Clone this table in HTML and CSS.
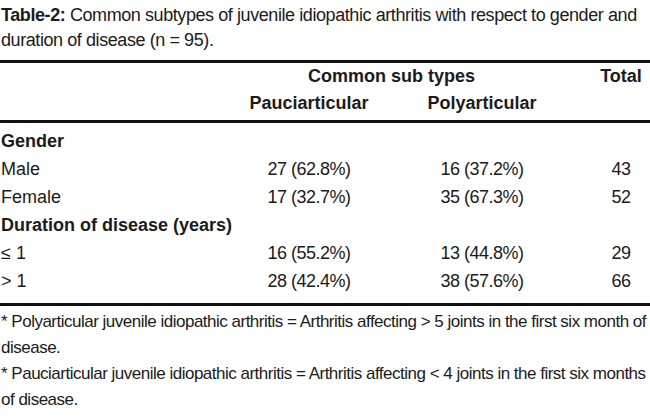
FILE: index.html
```html
<!DOCTYPE html>
<html>
<head>
<meta charset="utf-8">
<link rel="stylesheet" href="styles.css">
</head>
<body>
<div class="page">
  <p class="caption"><b>Table-2:</b> Common subtypes of juvenile idiopathic arthritis with respect to gender and<br>duration of disease (n = 95).</p>
  <div class="table">
    <div class="head">
      <div class="row hrow">
        <div></div>
        <div class="span2 b">Common sub types</div>
        <div class="c b">Total</div>
      </div>
      <div class="row hrow">
        <div></div>
        <div class="c b">Pauciarticular</div>
        <div class="c b">Polyarticular</div>
        <div></div>
      </div>
    </div>
    <div class="body">
      <div class="row"><div class="b wide">Gender</div></div>
      <div class="row"><div>Male</div><div class="c n">27 (62.8%)</div><div class="c n">16 (37.2%)</div><div class="c n">43</div></div>
      <div class="row"><div>Female</div><div class="c n">17 (32.7%)</div><div class="c n">35 (67.3%)</div><div class="c n">52</div></div>
      <div class="row"><div class="b wide">Duration of disease (years)</div></div>
      <div class="row"><div>≤ 1</div><div class="c n">16 (55.2%)</div><div class="c n">13 (44.8%)</div><div class="c n">29</div></div>
      <div class="row"><div>&gt; 1</div><div class="c n">28 (42.4%)</div><div class="c n">38 (57.6%)</div><div class="c n">66</div></div>
    </div>
  </div>
  <div class="notes">
    <p>* Polyarticular juvenile idiopathic arthritis = Arthritis affecting &gt; 5 joints in the first six month of<br>disease.</p>
    <p>* Pauciarticular juvenile idiopathic arthritis = Arthritis affecting &lt; 4 joints in the first six months<br>of disease.</p>
  </div>
</div>
</body>
</html>
```

FILE: styles.css
```css
html, body {
  margin: 0;
  padding: 0;
  background: #fff;
}
.page {
  width: 650px;
  font-family: "Liberation Sans", Arial, sans-serif;
  font-size: 18px;
  color: #1c1a1b;
  padding-top: 3px;
}
.caption {
  margin: 0 0 7px 0;
  line-height: 25px;
  padding-left: 1px;
  letter-spacing: -0.42px;
  white-space: nowrap;
}
.table {
  border-top: 3px solid #111;
  border-bottom: 3px solid #111;
}
.head {
  border-bottom: 3px solid #111;
  padding-bottom: 3px;
}
.body {
  padding-top: 4px;
  padding-bottom: 8px;
}
.row {
  display: grid;
  grid-template-columns: 198px 120px 124px 52px;
  column-gap: 51px;
  height: 28px;
  line-height: 28px;
  white-space: nowrap;
}
.hrow {
  height: 27px;
  line-height: 27px;
}
.row > div:first-child {
  padding-left: 1px;
}
.c {
  text-align: center;
}
.n {
  letter-spacing: -0.5px;
}
.b {
  font-weight: bold;
}
.span2 {
  grid-column: 2 / 4;
  text-align: center;
  padding-right: 10px;
}
.wide {
  grid-column: 1 / 5;
}
.notes {
  padding-top: 3px;
}
.notes p {
  margin: 0;
  font-size: 17px;
  line-height: 26px;
  letter-spacing: -0.5px;
  padding-left: 1px;
  white-space: nowrap;
}
```
